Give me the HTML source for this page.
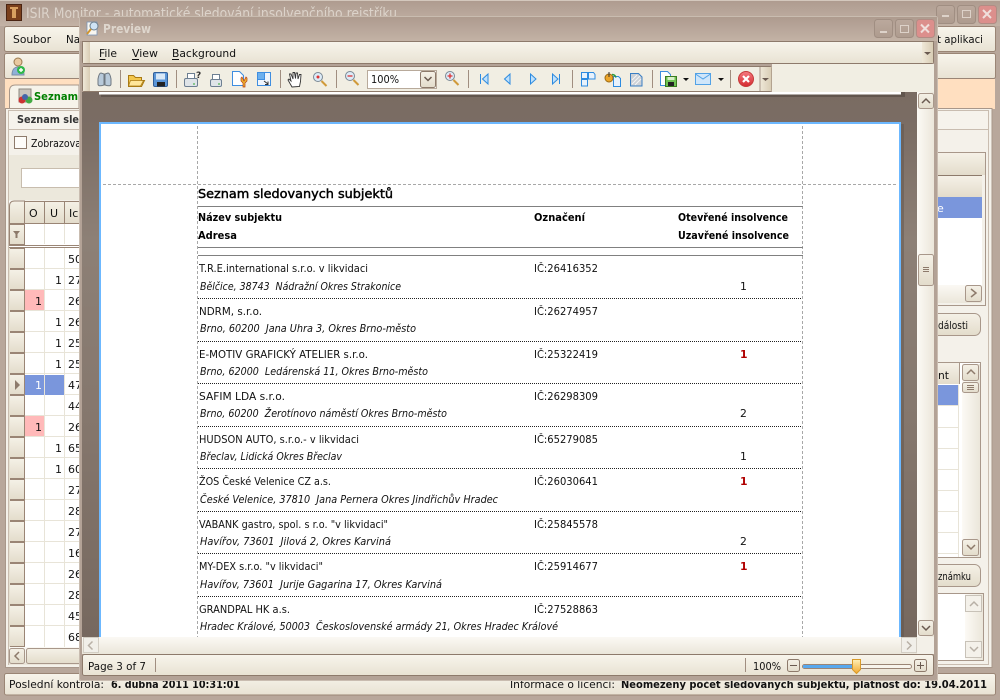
<!DOCTYPE html>
<html><head><meta charset="utf-8"><title>Preview</title>
<style>
html,body{margin:0;padding:0;width:1000px;height:700px;overflow:hidden;background:#b8a79b}
svg{display:block}
text{font-family:"DejaVu Sans","Liberation Sans",sans-serif;font-size:11px;fill:#111;white-space:pre}
.r{font-size:10.8px;fill:#111}
.i{font-size:10.8px;font-style:italic;fill:#111}
.b{font-size:10.8px;font-weight:bold;fill:#000}
.c{shape-rendering:crispEdges}
.g line{shape-rendering:crispEdges}
.sv{fill:none;stroke:#9a8575;stroke-width:1}
</style></head><body>
<svg width="1000" height="700" viewBox="0 0 1000 700" xmlns="http://www.w3.org/2000/svg">
<defs>
<linearGradient id="tb" x1="0" y1="0" x2="0" y2="1"><stop offset="0" stop-color="#ae9b8e"/><stop offset=".35" stop-color="#b5a397"/><stop offset="1" stop-color="#c3b2a5"/></linearGradient>
<linearGradient id="mn" x1="0" y1="0" x2="0" y2="1"><stop offset="0" stop-color="#f8f5ec"/><stop offset="1" stop-color="#e8e2d3"/></linearGradient>
<linearGradient id="hd" x1="0" y1="0" x2="0" y2="1"><stop offset="0" stop-color="#f5f1e7"/><stop offset="1" stop-color="#e3dccb"/></linearGradient>
<linearGradient id="grip" x1="0" y1="0" x2="1" y2="0"><stop offset="0" stop-color="#efe8d8"/><stop offset="1" stop-color="#d8ccb4"/></linearGradient>
<linearGradient id="sb" x1="0" y1="0" x2="1" y2="0"><stop offset="0" stop-color="#fcfaf5"/><stop offset="1" stop-color="#ebe6da"/></linearGradient>
<linearGradient id="sh" x1="0" y1="0" x2="0" y2="1"><stop offset="0" stop-color="#fbf9f4"/><stop offset="1" stop-color="#ebe6da"/></linearGradient>
<linearGradient id="bg" x1="0" y1="0" x2="0" y2="1"><stop offset="0" stop-color="#796b62"/><stop offset=".07" stop-color="#7b6d64"/><stop offset=".27" stop-color="#8d8076"/><stop offset=".6" stop-color="#85776d"/><stop offset="1" stop-color="#76685f"/></linearGradient>
<linearGradient id="btn" x1="0" y1="0" x2="0" y2="1"><stop offset="0" stop-color="#bba99d"/><stop offset="1" stop-color="#ae9b8e"/></linearGradient>
<linearGradient id="thumb" x1="0" y1="0" x2="0" y2="1"><stop offset="0" stop-color="#fff0b8"/><stop offset="1" stop-color="#f2a92e"/></linearGradient>
<linearGradient id="redb" x1="0" y1="0" x2="0" y2="1"><stop offset="0" stop-color="#f47a80"/><stop offset="1" stop-color="#d52a30"/></linearGradient>
</defs>

<!-- MAIN WINDOW -->
<rect width="1000" height="700" fill="#b8a79b" class="c"/>
<rect x="0" y="0" width="1000" height="26" fill="url(#tb)" class="c"/>
<rect x="0" y="0" width="1000" height="1" fill="#d4c8bd" class="c"/>
<rect x="6" y="4" width="16" height="17" fill="#4a2412" class="c"/>
<rect x="7" y="5" width="14" height="15" fill="#7a3f1c" class="c"/>
<rect x="12" y="7" width="4" height="11" fill="#d9a060" class="c"/>
<rect x="10" y="7" width="8" height="2" fill="#d9a060" class="c"/>
<text x="26" y="18" style="font-size:14px;fill:#dcd3ca" textLength="371" lengthAdjust="spacingAndGlyphs">ISIR Monitor - automatické sledování insolvenčního rejstříku</text>
<!-- main window buttons -->
<rect x="936.500" y="5.500" width="18" height="18" rx="3" fill="url(#btn)" stroke="#a08e82"/>
<rect x="942" y="15" width="7" height="2" fill="#ddd2c9" class="c"/>
<rect x="957.500" y="5.500" width="18" height="18" rx="3" fill="url(#btn)" stroke="#a08e82"/>
<rect x="962.500" y="10.500" width="8" height="7" fill="none" stroke="#ddd2c9" class="c"/>
<rect x="978.500" y="5.500" width="18" height="18" rx="3" fill="#dc8f8c" stroke="#b28c84"/>
<path d="M983 10l8 8M991 10l-8 8" stroke="#f0dfdc" stroke-width="2"/>

<!-- main menu + toolbar -->
<rect x="4.500" y="26.500" width="991" height="25" rx="2" fill="url(#mn)" stroke="#9a8575"/>
<text x="13" y="43" textLength="38" lengthAdjust="spacingAndGlyphs">Soubor</text>
<text x="66" y="43" textLength="14" lengthAdjust="spacingAndGlyphs">Na</text>
<text x="937" y="43" textLength="46" lengthAdjust="spacingAndGlyphs">t aplikaci</text>
<rect x="4.500" y="53.500" width="991" height="25" rx="2" fill="url(#mn)" stroke="#9a8575"/>
<!-- user add icon -->
<circle cx="18" cy="62" r="4" fill="#e9c9a0" stroke="#9a7a50"/>
<path d="M12 75c0-6 3-8 6-8s6 2 6 8z" fill="#8fb0d8" stroke="#7a8ea8"/>
<circle cx="21" cy="70" r="4" fill="#2fb84a"/>
<path d="M19 70h4M21 68v4" stroke="#fff" stroke-width="1.400"/>
<!-- peach -->
<rect x="5" y="79" width="990" height="30" fill="#ffdfc0" class="c"/>
<!-- tab -->
<path d="M9.500 109V91q0-6 6-6H79v24" fill="#f6f3ea" stroke="#a8978a"/>
<rect x="19" y="89" width="12" height="13" fill="#c9c4bc" stroke="#8d8880"/>
<circle cx="22" cy="100" r="3.500" fill="#c33"/><circle cx="29" cy="100" r="3.500" fill="#4a4"/><circle cx="25" cy="97" r="3" fill="#46a"/>
<text x="34" y="100" style="font-size:11px;font-weight:bold;fill:#008000" textLength="44" lengthAdjust="spacingAndGlyphs">Seznam</text>
<!-- main card -->
<rect x="5" y="108" width="987" height="560" fill="#f4f1ea" class="c"/>
<rect x="5.500" y="108.500" width="986.500" height="559" fill="none" stroke="#a8978a"/>
<rect x="8.500" y="110.500" width="980" height="554" fill="none" stroke="#c9bdb0"/>
<rect x="9" y="111" width="979" height="18" fill="#f6f3ec" class="c"/>
<text x="17" y="123" style="font-size:11px;font-weight:bold;fill:#333" textLength="62" lengthAdjust="spacingAndGlyphs">Seznam sle</text>
<rect x="9" y="129" width="979" height="1" fill="#c9bdb0" class="c"/>
<rect x="14.500" y="136.500" width="12" height="12" fill="#fdfcf9" stroke="#8d7a6b"/>
<text x="31" y="147" textLength="50" lengthAdjust="spacingAndGlyphs">Zobrazova</text>
<rect x="9" y="155" width="75" height="45" fill="#ece8dc" class="c"/>
<rect x="21.500" y="168.500" width="60" height="19" fill="#fff" stroke="#c8bdae"/>

<!-- LEFT GRID -->
<rect x="9" y="201" width="75" height="447" fill="#fff" class="c"/>
<path d="M9.500 223.500V206q0-5 5-5h10v22.500z" fill="url(#hd)" stroke="#9a8575"/>
<rect x="25" y="201" width="60" height="22" fill="url(#hd)" class="c"/>
<path d="M24.500 201.500H84M44.500 201v22M64.500 201v22M9 223.500H84" class="sv c"/>
<text x="29" y="217">O</text><text x="50" y="217">U</text><text x="69" y="217">Ic</text>
<rect x="9.500" y="224.500" width="15" height="20" fill="url(#hd)" stroke="#9a8575"/>
<path d="M13 231h7l-2.500 3v4h-2v-4z" fill="#8d7a6b"/>
<path d="M44.500 224v20M64.500 224v20" stroke="#e8e4d8" class="c"/>
<path d="M9 245.500H84M9 247.500H84" stroke="#9a8575" class="c"/>
<g class="g" stroke="#e8e4d8">
<line x1="25" x2="84" y1="268.500" y2="268.500"/><line x1="25" x2="84" y1="289.500" y2="289.500"/><line x1="25" x2="84" y1="310.500" y2="310.500"/><line x1="25" x2="84" y1="331.500" y2="331.500"/><line x1="25" x2="84" y1="352.500" y2="352.500"/><line x1="25" x2="84" y1="373.500" y2="373.500"/><line x1="25" x2="84" y1="394.500" y2="394.500"/><line x1="25" x2="84" y1="415.500" y2="415.500"/><line x1="25" x2="84" y1="436.500" y2="436.500"/><line x1="25" x2="84" y1="457.500" y2="457.500"/><line x1="25" x2="84" y1="478.500" y2="478.500"/><line x1="25" x2="84" y1="499.500" y2="499.500"/><line x1="25" x2="84" y1="520.500" y2="520.500"/><line x1="25" x2="84" y1="541.500" y2="541.500"/><line x1="25" x2="84" y1="562.500" y2="562.500"/><line x1="25" x2="84" y1="583.500" y2="583.500"/><line x1="25" x2="84" y1="604.500" y2="604.500"/><line x1="25" x2="84" y1="625.500" y2="625.500"/>
<line x1="44.500" x2="44.500" y1="248" y2="647"/><line x1="64.500" x2="64.500" y1="248" y2="647"/>
</g>
<rect x="25" y="290" width="19" height="20" fill="#ffb9b9" class="c"/>
<rect x="25" y="416" width="19" height="20" fill="#ffb9b9" class="c"/>
<rect x="25" y="375" width="19" height="20" fill="#7a96dc" class="c"/>
<rect x="45" y="375" width="19" height="20" fill="#7a96dc" class="c"/>
<!-- row headers -->
<g fill="url(#hd)" stroke="#9a8575" class="c">
<rect x="9.500" y="248.500" width="15" height="20"/><rect x="9.500" y="269.500" width="15" height="20"/><rect x="9.500" y="290.500" width="15" height="20"/><rect x="9.500" y="311.500" width="15" height="20"/><rect x="9.500" y="332.500" width="15" height="20"/><rect x="9.500" y="353.500" width="15" height="20"/><rect x="9.500" y="374.500" width="15" height="20"/><rect x="9.500" y="395.500" width="15" height="20"/><rect x="9.500" y="416.500" width="15" height="20"/><rect x="9.500" y="437.500" width="15" height="20"/><rect x="9.500" y="458.500" width="15" height="20"/><rect x="9.500" y="479.500" width="15" height="20"/><rect x="9.500" y="500.500" width="15" height="20"/><rect x="9.500" y="521.500" width="15" height="20"/><rect x="9.500" y="542.500" width="15" height="20"/><rect x="9.500" y="563.500" width="15" height="20"/><rect x="9.500" y="584.500" width="15" height="20"/><rect x="9.500" y="605.500" width="15" height="20"/><rect x="9.500" y="626.500" width="15" height="20"/>
</g>
<rect x="9" y="248" width="1" height="399" fill="#e6e0d0" class="c"/>
<path d="M15 380l5 5-5 5z" fill="#8d7a6b"/>
<g>
<text x="68" y="263">50</text>
<text x="55" y="284">1</text><text x="68" y="284">27</text>
<text x="35" y="305">1</text><text x="68" y="305">26</text>
<text x="55" y="326">1</text><text x="68" y="326">26</text>
<text x="55" y="347">1</text><text x="68" y="347">25</text>
<text x="55" y="368">1</text><text x="68" y="368">25</text>
<text x="35" y="389" style="fill:#fff">1</text><text x="68" y="389">47</text>
<text x="68" y="410">44</text>
<text x="35" y="431">1</text><text x="68" y="431">26</text>
<text x="55" y="452">1</text><text x="68" y="452">65</text>
<text x="55" y="473">1</text><text x="68" y="473">60</text>
<text x="68" y="494">27</text><text x="68" y="515">28</text><text x="68" y="536">27</text><text x="68" y="557">16</text><text x="68" y="578">26</text><text x="68" y="599">28</text><text x="68" y="620">45</text><text x="68" y="641">68</text>
</g>
<rect x="9" y="647" width="75" height="18" fill="url(#sh)" class="c"/>
<rect x="9.500" y="648.500" width="15" height="15" rx="2" fill="url(#hd)" stroke="#a8978a"/>
<path d="M19 652l-4 4 4 4" fill="none" stroke="#8d7a6b" stroke-width="1.500"/>
<rect x="26.500" y="648.500" width="70" height="15" rx="2" fill="url(#hd)" stroke="#a8978a"/>

<!-- RIGHT SIDE -->
<rect x="937" y="152.500" width="48.500" height="153" fill="#f4f1ea" stroke="#a8978a"/>
<rect x="937" y="153" width="48" height="22" fill="url(#hd)" class="c"/>
<rect x="937" y="175" width="45" height="1" fill="#8d7a6b" class="c"/>
<rect x="937" y="176" width="45" height="21" fill="url(#hd)" class="c"/>
<rect x="937" y="197" width="45" height="88" fill="#fff" class="c"/>
<rect x="937" y="197" width="45" height="21" fill="#7a96dc" class="c"/>
<text x="937" y="212" style="fill:#fff">e</text>
<rect x="937" y="285" width="45" height="18" fill="url(#sh)" class="c"/>
<rect x="965.500" y="285.500" width="16" height="16" rx="2" fill="url(#hd)" stroke="#a8978a"/>
<path d="M971 289l5 4-5 4" fill="none" stroke="#8d7a6b" stroke-width="1.500"/>
<rect x="930" y="313.500" width="50.500" height="22" rx="6" fill="url(#hd)" stroke="#a8978a"/>
<text x="938" y="329" textLength="30" lengthAdjust="spacingAndGlyphs">dálosti</text>
<rect x="930" y="362.500" width="50.500" height="195" fill="#fff" stroke="#a8978a"/>
<rect x="937" y="363" width="22" height="21" fill="url(#hd)" class="c"/>
<rect x="959" y="363" width="1" height="21" fill="#a8978a" class="c"/>
<text x="938" y="379" textLength="11" lengthAdjust="spacingAndGlyphs">nt</text>
<rect x="937" y="385" width="21" height="20" fill="#7a96dc" class="c"/>
<g class="g" stroke="#e8e4d8">
<line x1="937" x2="958" y1="405.500" y2="405.500"/><line x1="937" x2="958" y1="427.500" y2="427.500"/><line x1="937" x2="958" y1="448.500" y2="448.500"/><line x1="937" x2="958" y1="469.500" y2="469.500"/><line x1="937" x2="958" y1="490.500" y2="490.500"/><line x1="937" x2="958" y1="511.500" y2="511.500"/><line x1="937" x2="958" y1="532.500" y2="532.500"/><line x1="937" x2="958" y1="553.500" y2="553.500"/>
<line x1="958.500" x2="958.500" y1="385" y2="557"/>
</g>
<rect x="962" y="364" width="18" height="193" fill="url(#sb)" class="c"/>
<rect x="962.500" y="364.500" width="16" height="16" rx="2" fill="url(#hd)" stroke="#a8978a"/>
<path d="M967 374l4-4 4 4" fill="none" stroke="#8d7a6b" stroke-width="1.500"/>
<rect x="962.500" y="382.500" width="16" height="10" rx="2" fill="url(#hd)" stroke="#a8978a"/>
<path d="M967 385.500h7M967 387.500h7M967 389.500h7" stroke="#8d7a6b" class="c"/>
<rect x="962.500" y="539.500" width="16" height="16" rx="2" fill="url(#hd)" stroke="#a8978a"/>
<path d="M967 545l4 4 4-4" fill="none" stroke="#8d7a6b" stroke-width="1.500"/>
<rect x="930" y="564.500" width="50.500" height="22" rx="6" fill="url(#hd)" stroke="#a8978a"/>
<text x="938" y="580" textLength="33" lengthAdjust="spacingAndGlyphs">známku</text>
<rect x="930" y="593.500" width="53.500" height="67" fill="#fff" stroke="#a8978a"/>
<rect x="965" y="594" width="18" height="66" fill="url(#sb)" class="c"/>
<rect x="965.500" y="595.500" width="16" height="16" fill="#f4f1ea" stroke="#c8c2b8"/>
<path d="M970 606l4-4 4 4" fill="none" stroke="#b8b0a6" stroke-width="1.500"/>
<rect x="965.500" y="641.500" width="16" height="16" fill="#f4f1ea" stroke="#c8c2b8"/>
<path d="M970 647l4 4 4-4" fill="none" stroke="#b8b0a6" stroke-width="1.500"/>

<!-- main status bar -->
<rect x="4.500" y="673.500" width="991" height="21.500" rx="2" fill="url(#mn)" stroke="#9a8575"/>
<text x="9" y="688" textLength="95" lengthAdjust="spacingAndGlyphs">Poslední kontrola:</text>
<text x="111" y="688" style="font-weight:bold" textLength="129" lengthAdjust="spacingAndGlyphs">6. dubna 2011 10:31:01</text>
<text x="510" y="688" textLength="105" lengthAdjust="spacingAndGlyphs">Informace o licenci:</text>
<text x="621" y="688" style="font-weight:bold" textLength="366" lengthAdjust="spacingAndGlyphs">Neomezený počet sledovaných subjektů, platnost do: 19.04.2011</text>

<!-- PREVIEW WINDOW -->
<rect x="79" y="16" width="859" height="665" rx="2" fill="#b3a296" />
<rect x="79.500" y="16.500" width="858" height="664" rx="2" fill="none" stroke="#c9bcb0"/>
<rect x="80" y="17" width="857" height="24" fill="url(#tb)" class="c"/>
<rect x="82" y="41" width="852" height="1" fill="#8d7a6b" class="c"/>
<!-- preview icon -->
<rect x="87" y="22" width="10" height="13" fill="#f8f6f0" stroke="#7a95b8" stroke-width=".8"/>
<circle cx="94" cy="26" r="4" fill="#cfe3f5" stroke="#6c7f8f"/>
<path d="M91 29l-4 5" stroke="#d2952d" stroke-width="2"/>
<text x="103" y="33" style="font-size:12px;font-weight:bold;fill:#ded6cd" textLength="48" lengthAdjust="spacingAndGlyphs">Preview</text>
<rect x="874.500" y="19.500" width="18" height="18" rx="3" fill="url(#btn)" stroke="#a08e82"/>
<rect x="880" y="31" width="7" height="2" fill="#ddd2c9" class="c"/>
<rect x="895.500" y="19.500" width="18" height="18" rx="3" fill="url(#btn)" stroke="#a08e82"/>
<rect x="900.500" y="25.500" width="8" height="7" fill="none" stroke="#ddd2c9" class="c"/>
<rect x="916.500" y="19.500" width="18" height="18" rx="3" fill="#dc8f8c" stroke="#b28c84"/>
<path d="M921 24.500l8 8M929 24.500l-8 8" stroke="#f0dfdc" stroke-width="2"/>

<!-- preview menu -->
<rect x="82.500" y="41.500" width="851" height="22" rx="2" fill="url(#mn)" stroke="#8d7a6b"/>
<rect x="83" y="42" width="7" height="21" fill="url(#grip)" class="c"/>
<text x="99" y="57" textLength="18" lengthAdjust="spacingAndGlyphs">File</text>
<text x="132" y="57" textLength="26" lengthAdjust="spacingAndGlyphs">View</text>
<text x="172" y="57" textLength="64" lengthAdjust="spacingAndGlyphs">Background</text>
<path d="M99.500 59.500h6M132 59.500h7M172 59.500h7" stroke="#111" class="c"/>
<rect x="922" y="42" width="11" height="21" fill="url(#grip)" class="c"/>
<path d="M924 52h7l-3.500 3z" fill="#6a5a50"/>
<!-- preview toolbar -->
<rect x="82.500" y="66.500" width="689" height="25" rx="2" fill="#f1eee3" stroke="#8d7a6b"/>
<rect x="772" y="64" width="162" height="28" fill="#f1eee3" class="c"/>
<rect x="83" y="67" width="7" height="24" fill="url(#grip)" class="c"/>
<rect x="760" y="67" width="11.500" height="24" fill="url(#grip)" class="c"/>
<rect x="759.500" y="67" width="1" height="24" fill="#a8978a" class="c"/>
<path d="M762 78h7l-3.500 3z" fill="#6a5a50"/>
<!-- separators -->
<path d="M120.500 70v18M176.500 70v18M280.500 70v18M336.500 70v18M468.500 70v18M572.500 70v18M652.500 70v18M730.500 70v18" stroke="#a08e80" class="c"/>
<!-- binoculars -->
<path d="M98 79q1-6 3-6l3 1v11q-6 2-6-1zM111 79q-1-6-3-6l-3 1v11q6 2 6-1z" fill="#b8cada" stroke="#6f7880"/>
<!-- folder -->
<path d="M128.500 75.500h5l2 2h6v3h3l-3 6h-13z" fill="#f3c74d" stroke="#a97a14"/>
<path d="M130.500 80.500h13l-3 5.500h-12z" fill="#ffe69a" stroke="#a97a14" stroke-width=".7"/>
<!-- save -->
<rect x="153.500" y="72.500" width="14" height="14" rx="1.500" fill="#5b96d8" stroke="#31609a"/>
<rect x="156" y="73.500" width="9" height="6" fill="#d8e8f7"/>
<rect x="157" y="82" width="8" height="4.500" fill="#222"/>
<!-- printer ? -->
<rect x="187.500" y="73.500" width="7" height="5" fill="#fff" stroke="#6d7f92"/>
<rect x="184.500" y="78.500" width="13" height="8" rx="1.500" fill="#dfe4e8" stroke="#6d7f92"/>
<circle cx="194" cy="84" r=".9" fill="#49b04a"/>
<text x="196" y="78" style="font-size:9px;font-weight:bold;fill:#333">?</text>
<!-- printer -->
<rect x="212.500" y="74.500" width="7" height="5" fill="#fff" stroke="#6d7f92"/>
<rect x="210.500" y="79.500" width="11" height="7" rx="1.500" fill="#dfe4e8" stroke="#6d7f92"/>
<circle cx="219" cy="84" r=".9" fill="#49b04a"/>
<!-- page setup -->
<path d="M232.500 71.500h7l4 4v10h-11z" fill="#fff" stroke="#3f8ee0"/>
<path d="M242 77l2 4 2-4 1 1v3l-2 2v4h-2v-4l-2-2v-3z" fill="#eeb52e" stroke="#b53a14" stroke-width=".7"/>
<!-- resize -->
<rect x="257.500" y="72.500" width="13" height="13" fill="#eff5fc" stroke="#3f8ee0"/>
<rect x="257.500" y="72.500" width="7" height="7" fill="#6cb0ee" stroke="#3f8ee0"/>
<path d="M264 81l4 3M268 81.500v3h-3" fill="none" stroke="#333"/>
<!-- hand -->
<path d="M292 87l-4-7 1-1 2 2-1.500-7h1.500l2 5v-6.500h1.500l1 6 .5-5.500h1.500l.5 6 1.500-4.500h1.500l-.5 7-1 5z" fill="#fff" stroke="#333" stroke-width=".9"/>
<!-- magnifier -->
<circle cx="318" cy="77" r="4.500" fill="#dcebf7" stroke="#7a8894"/>
<circle cx="318" cy="77" r="1.500" fill="#d33"/>
<path d="M321.500 81l5 5" stroke="#d09a3a" stroke-width="2"/>
<!-- zoom out -->
<circle cx="350" cy="76" r="4.500" fill="#dcebf7" stroke="#7a8894"/>
<path d="M347.500 76h5" stroke="#d33" stroke-width="1.300"/>
<path d="M353.500 80l5 5" stroke="#d09a3a" stroke-width="2"/>
<!-- combo -->
<rect x="367.500" y="70.500" width="69" height="18" fill="#fff" stroke="#b8aa9b"/>
<text x="371" y="83" textLength="28" lengthAdjust="spacingAndGlyphs">100%</text>
<rect x="420.500" y="71.500" width="15" height="16" rx="2" fill="url(#hd)" stroke="#8d7a6b"/>
<path d="M424.500 77l3.500 3.500 3.500-3.500" fill="none" stroke="#6a5a50" stroke-width="1.500"/>
<!-- zoom in -->
<circle cx="450" cy="76" r="4.500" fill="#dcebf7" stroke="#7a8894"/>
<path d="M447.500 76h5M450 73.500v5" stroke="#d33" stroke-width="1.300"/>
<path d="M453.500 80l5 5" stroke="#d09a3a" stroke-width="2"/>
<!-- nav -->
<path d="M480.500 74v10M488 74v10l-5.500-5z" fill="#bfe0fb" stroke="#2d8be0"/>
<path d="M510 74v10l-5.500-5z" fill="#bfe0fb" stroke="#2d8be0"/>
<path d="M530.500 74v10l5.500-5z" fill="#bfe0fb" stroke="#2d8be0"/>
<path d="M559.500 74v10M552.500 74v10l5.500-5z" fill="#bfe0fb" stroke="#2d8be0"/>
<!-- multipage -->
<path d="M581.500 72.500h6v6h-6zM588.500 72.500h5l1.500 2v4.500h-6.500zM581.500 79.500h6v6.500h-6z" fill="#e8f2fc" stroke="#2d8be0"/>
<!-- color -->
<path d="M613.500 76.500h5l2 2v8h-7z" fill="#e8f2fc" stroke="#2d8be0"/>
<circle cx="609" cy="78" r="4" fill="#eda62a" stroke="#9a6a14"/>
<path d="M609 72v5" stroke="#333"/>
<path d="M612 74.500q3 0 4 3" stroke="#2a9a3a" stroke-width="1.500" fill="none"/>
<!-- watermark -->
<path d="M630.500 73.500h8l3.500 3.500v9h-11.500z" fill="#ccd0d6" stroke="#3a7fc4"/>
<path d="M632 84l8-8M632 80l5-5M635 85l6-6" stroke="#f4f4f4"/>
<!-- export -->
<path d="M660.500 71.500h7l3 3v11h-10z" fill="#fff" stroke="#3f8ee0"/>
<rect x="665.500" y="76.500" width="11" height="10" fill="#6fc254" stroke="#3a7a20"/>
<rect x="668" y="82" width="6" height="4" fill="#222"/>
<rect x="667.500" y="77" width="7" height="3" fill="#d8f0c8"/>
<path d="M683 78h6l-3 3z" fill="#111"/>
<!-- mail -->
<rect x="695.500" y="73.500" width="15" height="11" fill="#cfe6fa" stroke="#52a2e6"/>
<path d="M695.500 74l7.500 5 7.500-5" fill="none" stroke="#52a2e6"/>
<path d="M718 78h6l-3 3z" fill="#111"/>
<!-- close -->
<circle cx="746" cy="79" r="7.500" fill="url(#redb)" stroke="#c53a3a"/>
<path d="M743 76l6 6M749 76l-6 6" stroke="#fff" stroke-width="2.200"/>

<!-- PREVIEW CLIENT -->
<rect x="82" y="92" width="835" height="545" fill="url(#bg)" class="c"/>
<!-- prior page bottom -->
<rect x="101" y="92" width="804" height="5" fill="#4e433c" opacity=".55" class="c"/>
<rect x="99" y="92" width="802" height="2.500" fill="#fff" class="c"/>
<!-- page -->
<rect x="99" y="122" width="802" height="515" fill="#6cb8ff" class="c"/>
<rect x="101" y="124" width="798" height="513" fill="#fff" class="c"/>
<rect x="901" y="124" width="3" height="513" fill="#5f534b" opacity=".5" class="c"/>

<!-- margin guides -->
<path d="M197.500 126V637M802.500 126V637" stroke="#a8a8a8" stroke-dasharray="3 2" class="c"/>
<path d="M103 184.500H898" stroke="#a8a8a8" stroke-dasharray="3 2" class="c"/>
<!-- report -->
<text x="198" y="198" style="font-size:12.500px;fill:#000;stroke:#000;stroke-width:.45" textLength="195" lengthAdjust="spacingAndGlyphs">Seznam sledovanych subjektů</text>
<path d="M198 206.500H803M198 247.500H803M198 255.500H803" stroke="#808080" class="c"/>
<text class="b" x="198" y="221" textLength="84" lengthAdjust="spacingAndGlyphs">Název subjektu</text>
<text class="b" x="198" y="239" textLength="39" lengthAdjust="spacingAndGlyphs">Adresa</text>
<text class="b" x="534" y="221" textLength="51" lengthAdjust="spacingAndGlyphs">Označení</text>
<text class="b" x="678" y="221" textLength="110" lengthAdjust="spacingAndGlyphs">Otevřené insolvence</text>
<text class="b" x="678" y="239" textLength="111" lengthAdjust="spacingAndGlyphs">Uzavřené insolvence</text>
<path d="M198 298.500H802M198 341.500H802M198 383.500H802M198 426.500H802M198 468.500H802M198 511.500H802M198 553.500H802M198 596.500H802" stroke="#222" stroke-dasharray="1 1" class="c"/>

<text class="r" x="199" y="272" textLength="169" lengthAdjust="spacingAndGlyphs">T.R.E.international s.r.o. v likvidaci</text>
<text class="i" x="200" y="290" textLength="201" lengthAdjust="spacingAndGlyphs">Bělčice, 38743  Nádražní Okres Strakonice</text>
<text class="r" x="534" y="272" textLength="64" lengthAdjust="spacingAndGlyphs">IČ:26416352</text>
<text class="r" x="740" y="290">1</text>

<text class="r" x="199" y="315" textLength="63" lengthAdjust="spacingAndGlyphs">NDRM, s.r.o.</text>
<text class="i" x="200" y="332" textLength="216" lengthAdjust="spacingAndGlyphs">Brno, 60200  Jana Uhra 3, Okres Brno-město</text>
<text class="r" x="534" y="315" textLength="64" lengthAdjust="spacingAndGlyphs">IČ:26274957</text>

<text class="r" x="199" y="358" textLength="169" lengthAdjust="spacingAndGlyphs">E-MOTIV GRAFICKÝ ATELIER s.r.o.</text>
<text class="i" x="200" y="375" textLength="228" lengthAdjust="spacingAndGlyphs">Brno, 62000  Ledárenská 11, Okres Brno-město</text>
<text class="r" x="534" y="358" textLength="64" lengthAdjust="spacingAndGlyphs">IČ:25322419</text>
<text class="b" x="740" y="358" style="fill:#b00000">1</text>

<text class="r" x="199" y="400" textLength="86" lengthAdjust="spacingAndGlyphs">SAFIM LDA s.r.o.</text>
<text class="i" x="200" y="417" textLength="247" lengthAdjust="spacingAndGlyphs">Brno, 60200  Žerotínovo náměstí Okres Brno-město</text>
<text class="r" x="534" y="400" textLength="64" lengthAdjust="spacingAndGlyphs">IČ:26298309</text>
<text class="r" x="740" y="417">2</text>

<text class="r" x="199" y="443" textLength="160" lengthAdjust="spacingAndGlyphs">HUDSON AUTO, s.r.o.- v likvidaci</text>
<text class="i" x="200" y="460" textLength="142" lengthAdjust="spacingAndGlyphs">Břeclav, Lidická Okres Břeclav</text>
<text class="r" x="534" y="443" textLength="64" lengthAdjust="spacingAndGlyphs">IČ:65279085</text>
<text class="r" x="740" y="460">1</text>

<text class="r" x="199" y="485" textLength="132" lengthAdjust="spacingAndGlyphs">ŽOS České Velenice CZ a.s.</text>
<text class="i" x="200" y="503" textLength="298" lengthAdjust="spacingAndGlyphs">České Velenice, 37810  Jana Pernera Okres Jindřichův Hradec</text>
<text class="r" x="534" y="485" textLength="64" lengthAdjust="spacingAndGlyphs">IČ:26030641</text>
<text class="b" x="740" y="485" style="fill:#b00000">1</text>

<text class="r" x="199" y="528" textLength="189" lengthAdjust="spacingAndGlyphs">VABANK gastro, spol. s r.o. "v likvidaci"</text>
<text class="i" x="200" y="545" textLength="191" lengthAdjust="spacingAndGlyphs">Havířov, 73601  Jilová 2, Okres Karviná</text>
<text class="r" x="534" y="528" textLength="64" lengthAdjust="spacingAndGlyphs">IČ:25845578</text>
<text class="r" x="740" y="545">2</text>

<text class="r" x="199" y="570" textLength="124" lengthAdjust="spacingAndGlyphs">MY-DEX s.r.o. "v likvidaci"</text>
<text class="i" x="200" y="588" textLength="242" lengthAdjust="spacingAndGlyphs">Havířov, 73601  Jurije Gagarina 17, Okres Karviná</text>
<text class="r" x="534" y="570" textLength="64" lengthAdjust="spacingAndGlyphs">IČ:25914677</text>
<text class="b" x="740" y="570" style="fill:#b00000">1</text>

<text class="r" x="199" y="613" textLength="91" lengthAdjust="spacingAndGlyphs">GRANDPAL HK a.s.</text>
<text class="i" x="200" y="630" textLength="358" lengthAdjust="spacingAndGlyphs">Hradec Králové, 50003  Československé armády 21, Okres Hradec Králové</text>
<text class="r" x="534" y="613" textLength="64" lengthAdjust="spacingAndGlyphs">IČ:27528863</text>

<!-- preview v scrollbar -->
<rect x="917" y="92" width="17" height="545" fill="url(#sb)" class="c"/>
<rect x="918.500" y="93.500" width="15" height="15" rx="2" fill="url(#hd)" stroke="#a8978a"/>
<path d="M922 103l4-4 4 4" fill="none" stroke="#6a5a50" stroke-width="1.500"/>
<rect x="918.500" y="254.500" width="15" height="31" rx="2" fill="url(#hd)" stroke="#a8978a"/>
<path d="M923 267.500h6M923 269.500h6M923 271.500h6" stroke="#8d7a6b" class="c"/>
<rect x="918.500" y="620.500" width="15" height="15" rx="2" fill="url(#hd)" stroke="#a8978a"/>
<path d="M922 626l4 4 4-4" fill="none" stroke="#6a5a50" stroke-width="1.500"/>
<!-- preview h scrollbar -->
<rect x="82" y="637" width="852" height="17" fill="url(#sh)" class="c"/>
<rect x="83.500" y="637.500" width="15" height="15" fill="#f1efe9" stroke="#d3cec4"/>
<path d="M92.500 641.500l-4 4 4 4" fill="none" stroke="#b8b0a6" stroke-width="1.500"/>
<rect x="901.500" y="637.500" width="15" height="15" fill="#f1efe9" stroke="#d3cec4"/>
<path d="M907 641.500l4 4-4 4" fill="none" stroke="#b8b0a6" stroke-width="1.500"/>
<rect x="917" y="637" width="17" height="17" fill="#f3f0e8" class="c"/>
<!-- preview status -->
<rect x="82.500" y="654.500" width="851" height="21" rx="2" fill="url(#mn)" stroke="#8d7a6b"/>
<text x="88" y="670" textLength="58" lengthAdjust="spacingAndGlyphs">Page 3 of 7</text>
<path d="M155.500 658v14M745.500 658v14" stroke="#a08e80" class="c"/>
<text x="753" y="670" textLength="28" lengthAdjust="spacingAndGlyphs">100%</text>
<rect x="787.500" y="659.500" width="12" height="12" rx="2" fill="url(#hd)" stroke="#8d7a6b"/>
<path d="M790 665.500h7" stroke="#6a5a50" class="c"/>
<rect x="802.500" y="664.500" width="109" height="4" rx="2" fill="#f7f4ec" stroke="#9a8575"/>
<rect x="803" y="665" width="52" height="3" fill="#58a8ee" class="c"/>
<path d="M852.500 659.500h8v10l-4 4-4-4z" fill="url(#thumb)" stroke="#d89a2a"/>
<rect x="914.500" y="659.500" width="12" height="12" rx="2" fill="url(#hd)" stroke="#8d7a6b"/>
<path d="M917 665.500h7M920.500 662v7" stroke="#6a5a50" class="c"/>
</svg>
</body></html>
